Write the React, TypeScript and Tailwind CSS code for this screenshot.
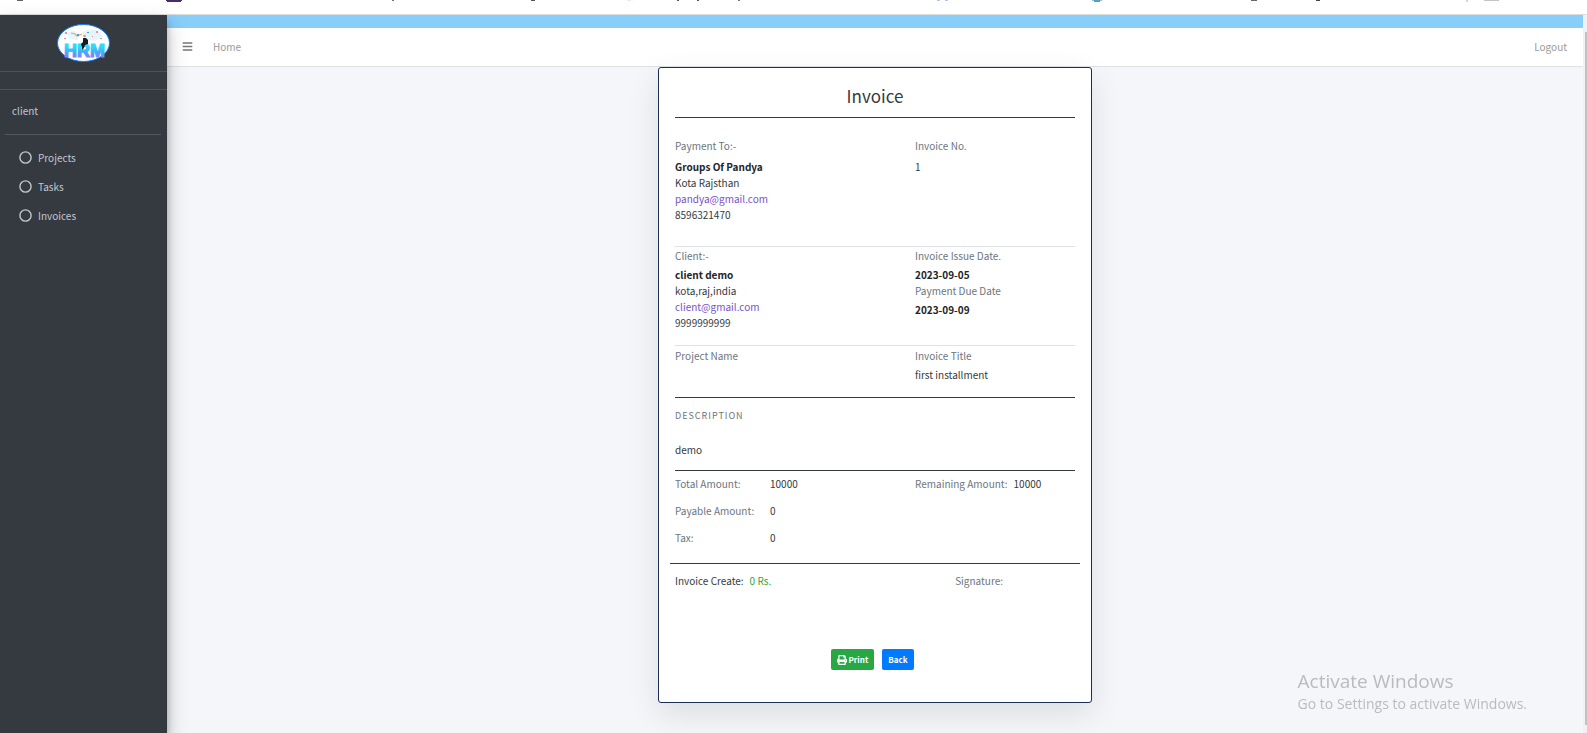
import React from 'react';
import { FaBars, FaPrint } from 'react-icons/fa';

interface Party {
  label: string;
  name: string;
  address: string;
  email: string;
  phone: string;
}

const payee: Party = {
  label: 'Payment To:-',
  name: 'Groups Of Pandya',
  address: 'Kota Rajsthan',
  email: 'pandya@gmail.com',
  phone: '8596321470',
};

const client: Party = {
  label: 'Client:-',
  name: 'client demo',
  address: 'kota,raj,india',
  email: 'client@gmail.com',
  phone: '9999999999',
};

const menu = ['Projects', 'Tasks', 'Invoices'];

// bottoms of the bookmark icons: x, width, height, colour
const bookmarks: [number, number, number, string][] = [
  [17, 6, 1, '#5f6368'],
  [166, 16, 1, '#4a2c6b'],
  [167, 14, 2, '#4a2c6b'],
  [392, 2, 1, '#777777'],
  [531, 4, 1, '#555555'],
  [627, 4, 1, '#fbe4e4'],
  [677, 2, 1, '#555555'],
  [697, 2, 1, '#555555'],
  [738, 2, 1, '#777777'],
  [937, 3, 1, '#a8c7fa'],
  [945, 3, 1, '#a8c7fa'],
  [1092, 10, 1, '#8fc3d6'],
  [1094, 6, 2, '#5d9fb8'],
  [1251, 6, 1, '#666666'],
  [1316, 4, 1, '#444444'],
  [1466, 2, 2, '#c9d7fb'],
  [1484, 15, 1, '#c4c4c4'],
];

function Logo() {
  return (
    <svg className="h-[38px] w-[53px]" viewBox="0 0 53 38" role="img" aria-label="HRM">
      <defs>
        <linearGradient id="hrm" x1="0" y1="0" x2="0" y2="1">
          <stop offset="0.25" stopColor="#2fdcf7" />
          <stop offset="0.6" stopColor="#4aa3f8" />
          <stop offset="0.85" stopColor="#9a78f5" />
        </linearGradient>
      </defs>
      <ellipse cx="26.5" cy="19" rx="26" ry="18.5" fill="#ffffff" stroke="#0b7bff" />
      <path d="M9 10q5-5 10-2l4 3-3 5-6-1zM25 8q8-5 18 0l3 5-8 4-10-2z" fill="#e4f5fb" />
      <path d="M14 9l4 1 2 2 5-2" stroke="#f0a060" strokeWidth="1.2" fill="none" />
      <path d="M20 10h2v2h-2zM30 8h2v1h-2z" fill="#3b9cf0" />
      <path d="M8 8h2v2H8zM39 7h2v2h-2zM43 14h2v1h-2zM7 14h2v1H7zM35 12h1v1h-1z" fill="#e58bb5" />
      <text x="7" y="33" fontFamily="Liberation Sans, sans-serif" fontWeight="bold" fontSize="18" fill="url(#hrm)" stroke="url(#hrm)" strokeWidth="1.2">
        HRM
      </text>
      <circle cx="27.5" cy="12" r="1.3" fill="#d99a6c" />
      <path d="M26 14h3l2 2v4l-3 1-1 3-2 2 0-3-1-3 2-2z" fill="#141c2b" />
    </svg>
  );
}

function PartyDetails({ party, gap }: { party: Party; gap: string }) {
  return (
    <div className="w-3/5">
      <p className={`text-[#6c757d] ${gap}`}>{party.label}</p>
      <p className="font-bold text-[#212529]">{party.name}</p>
      <p>{party.address}</p>
      <p>
        <a href={`mailto:${party.email}`} className="text-[#7952c4]">{party.email}</a>
      </p>
      <p>{party.phone}</p>
    </div>
  );
}

export default function App() {
  return (
    <div className="flex h-screen flex-col overflow-hidden bg-[#f4f6f9] font-['Noto_Sans_CJK_SC',sans-serif] text-[10px] leading-4 text-[#343a40]">
      {/* Browser edge */}
      <div className="h-[15px] shrink-0 border-b border-[#dcdedc] bg-white">
        <svg className="block h-[3px] w-full">
          {bookmarks.map(([x, w, h, fill]) => (
            <rect key={x} x={x} y="0" width={w} height={h} fill={fill} />
          ))}
        </svg>
      </div>

      <div className="flex min-h-0 flex-1">
        {/* Sidebar */}
        <aside className="z-10 w-[167px] shrink-0 bg-[#343a40] text-[#c2c7d0] shadow-[0_9px_19px_rgba(0,0,0,0.25),0_7px_7px_rgba(0,0,0,0.22)]">
          <a href="#" className="flex h-[57px] justify-center border-b border-[#4b545c] pt-[9px]">
            <Logo />
          </a>
          <div className="h-[18px] border-b border-[#4b545c]" />
          <div className="mr-[6px] ml-[5px] border-b border-[#4f5962] pt-[13px] pb-[15px] pl-[7px]">
            <a href="#">client</a>
          </div>
          <nav className="pt-2 pl-[19px]">
            {menu.map((item) => (
              <a key={item} href="#" className="flex h-[29px] items-center gap-[6px]">
                <svg className="h-[13px] w-[13px]" viewBox="0 0 13 13">
                  <circle cx="6.5" cy="6.5" r="5.6" fill="none" stroke="currentColor" strokeWidth="1.4" />
                </svg>
                {item}
              </a>
            ))}
          </nav>
        </aside>

        {/* Content */}
        <div className="min-w-0 flex-1">
          <div className="h-[13px] bg-[#87cefa]" />
          <header className="flex h-[39px] items-center border-b border-[#dee2e6] bg-white pr-4 pb-px pl-[15px] text-[#999999]">
            <button type="button" aria-label="Toggle menu" className="text-[#777777]">
              <FaBars size={11} />
            </button>
            <a href="#" className="ml-5">Home</a>
            <a href="#" className="ml-auto">Logout</a>
          </header>

          <main className="mx-auto w-full max-w-[434px] rounded-[3px] border border-[#1c2f58] bg-white px-4 pt-[15px] pb-8 shadow-[0_11px_32px_rgba(0,0,0,0.1)]">
            <h1 className="border-b border-[#343a40] pb-2 text-center text-[17px] leading-[26px]">Invoice</h1>

            <section className="flex border-b border-[#dee2e6] pt-5 pb-[23px]">
              <PartyDetails party={payee} gap="mb-[5px]" />
              <div>
                <p className="mb-[5px] text-[#6c757d]">Invoice No.</p>
                <p>1</p>
              </div>
            </section>

            <section className="flex border-b border-[#dee2e6] pt-px pb-[14px]">
              <PartyDetails party={client} gap="mb-[3px]" />
              <div>
                <p className="mb-[3px] text-[#6c757d]">Invoice Issue Date.</p>
                <p className="font-bold text-[#212529]">2023-09-05</p>
                <p className="mb-[3px] text-[#6c757d]">Payment Due Date</p>
                <p className="font-bold text-[#212529]">2023-09-09</p>
              </div>
            </section>

            <section className="flex border-b border-[#343a40] pt-[2px] pb-[14px]">
              <p className="w-3/5 text-[#6c757d]">Project Name</p>
              <div>
                <p className="mb-[3px] text-[#6c757d]">Invoice Title</p>
                <p>first installment</p>
              </div>
            </section>

            <section className="border-b border-[#343a40] pt-[10px] pb-3">
              <h2 className="mb-[18px] text-[9px] leading-4 tracking-[1px] text-[#6c757d] uppercase">Description</h2>
              <p>demo</p>
            </section>

            {/* Amounts */}
            <section className="-mx-[5px] flex border-b border-[#343a40] px-[5px] pt-[5px] pb-[17px]">
              <dl className="grid w-3/5 grid-cols-[95px_1fr] gap-y-[11px]">
                <dt className="text-[#6c757d]">Total Amount:</dt>
                <dd>10000</dd>
                <dt className="text-[#6c757d]">Payable Amount:</dt>
                <dd>0</dd>
                <dt className="text-[#6c757d]">Tax:</dt>
                <dd>0</dd>
              </dl>
              <dl className="flex gap-[6px]">
                <dt className="text-[#6c757d]">Remaining Amount:</dt>
                <dd>10000</dd>
              </dl>
            </section>

            <section className="flex pt-[9px]">
              <p className="flex flex-1 gap-[6px]">
                Invoice Create: <span className="text-[#28a745]">0 Rs.</span>
              </p>
              <p className="mr-[72px] text-[#6c757d]">Signature:</p>
            </section>

            <div className="mt-[60px] mr-[6px] flex justify-center gap-2 text-[8px] font-bold text-white">
              <button type="button" className="flex h-[21px] items-center gap-[2px] rounded-[2px] bg-[#28a745] px-[6px]">
                <FaPrint size={10} />
                Print
              </button>
              <a href="#" className="flex h-[21px] items-center rounded-[2px] bg-[#007bff] px-[6px]">Back</a>
            </div>
          </main>
        </div>

        {/* Scrollbar */}
        <div className="w-1 shrink-0 bg-[#f1f1f1] pt-[17px] pb-2 pl-[2px]">
          <div className="h-full bg-[#c1c1c1]" />
        </div>
      </div>

      {/* Windows notice */}
      <div className="fixed right-[60px] bottom-[19px] font-['Open_Sans',sans-serif] text-[#b9bbbe]">
        <p className="text-[19px] leading-[26px]">Activate Windows</p>
        <p className="text-[14px] leading-5">Go to Settings to activate Windows.</p>
      </div>
    </div>
  );
}
